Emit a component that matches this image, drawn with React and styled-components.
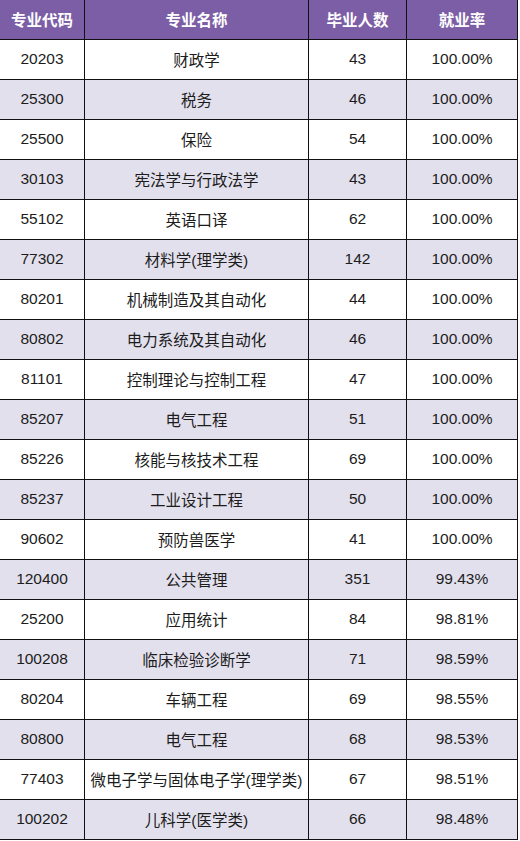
import React from 'react';
import styled, { createGlobalStyle } from 'styled-components';

const GlobalStyle = createGlobalStyle`
  html, body {
    margin: 0;
    padding: 0;
    background: #ffffff;
  }
  body {
    font-family: "Liberation Sans", "Noto Sans CJK SC", sans-serif;
  }
`;

const rows = [
  ['20203', '财政学', '43', '100.00%'],
  ['25300', '税务', '46', '100.00%'],
  ['25500', '保险', '54', '100.00%'],
  ['30103', '宪法学与行政法学', '43', '100.00%'],
  ['55102', '英语口译', '62', '100.00%'],
  ['77302', '材料学(理学类)', '142', '100.00%'],
  ['80201', '机械制造及其自动化', '44', '100.00%'],
  ['80802', '电力系统及其自动化', '46', '100.00%'],
  ['81101', '控制理论与控制工程', '47', '100.00%'],
  ['85207', '电气工程', '51', '100.00%'],
  ['85226', '核能与核技术工程', '69', '100.00%'],
  ['85237', '工业设计工程', '50', '100.00%'],
  ['90602', '预防兽医学', '41', '100.00%'],
  ['120400', '公共管理', '351', '99.43%'],
  ['25200', '应用统计', '84', '98.81%'],
  ['100208', '临床检验诊断学', '71', '98.59%'],
  ['80204', '车辆工程', '69', '98.55%'],
  ['80800', '电气工程', '68', '98.53%'],
  ['77403', '微电子学与固体电子学(理学类)', '67', '98.51%'],
  ['100202', '儿科学(医学类)', '66', '98.48%'],
];

const headers = ['专业代码', '专业名称', '毕业人数', '就业率'];

const Table = styled.div`
  display: grid;
  grid-template-columns: 85px 224px 98px 111px;
  grid-auto-rows: 40px;
  width: 518px;
`;

const Cell = styled.div`
  box-sizing: border-box;
  display: flex;
  align-items: center;
  justify-content: center;
  border-right: 1px solid #111;
  border-bottom: 1px solid #111;
  background: ${p => (p.$head ? '#7c5ea6' : p.$alt ? '#e3e0ed' : '#ffffff')};
  color: ${p => (p.$head ? '#ffffff' : '#1c1c1c')};
  font-weight: ${p => (p.$head ? 700 : 400)};
  font-size: 15.5px;
  white-space: nowrap;
  padding-bottom: 1px;
`;

const App = () => (
  <>
    <GlobalStyle />
    <Table>
      {headers.map(h => (
        <Cell key={h} $head>{h}</Cell>
      ))}
      {rows.map((r, i) =>
        r.map((v, j) => (
          <Cell key={`${i}-${j}`} $alt={i % 2 === 1}>{v}</Cell>
        ))
      )}
    </Table>
  </>
);

export default App;
